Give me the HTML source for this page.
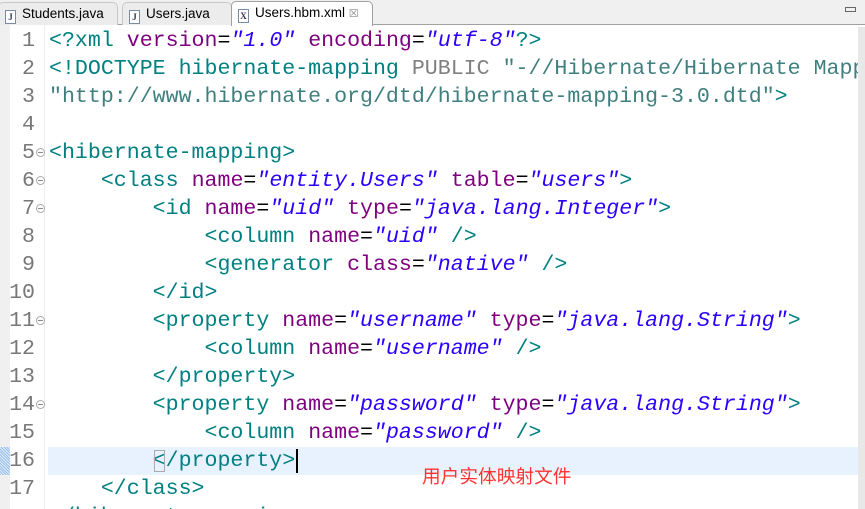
<!DOCTYPE html>
<html><head><meta charset="utf-8"><style>
html,body{margin:0;width:865px;height:509px;overflow:hidden}
body{background:#fff;font-family:"Liberation Sans",sans-serif}
#w{position:relative;width:865px;height:509px;overflow:hidden}
.tabs{position:absolute;left:0;top:0;width:865px;height:24px;background:#f0f0f0;border-bottom:1px solid #a0a0a0}
.tab{position:absolute;top:2px;height:22px;font-size:13.5px;line-height:22px;color:#000;border:1px solid #c8c8c8;border-bottom:none;border-radius:5px 5px 0 0;background:#ececec;overflow:hidden;white-space:nowrap}
.tab.act{background:#fff;top:1px;height:24px;border-color:#a0a0a0}
.ic{display:inline-block;width:9px;height:12px;border:1px solid #7a8aa0;background:#fff;font-size:9px;line-height:12px;text-align:center;color:#335;margin:0 6px 0 6px;vertical-align:-2px;font-family:"Liberation Serif",serif;font-weight:bold}
.gutL{position:absolute;left:0;top:25px;width:10px;height:484px;background:#f0f0f0}
.gutSep{position:absolute;left:44px;top:25px;width:1px;height:484px;background:#eee}
.ln{position:absolute;left:0;width:35px;text-align:right;font-family:"Liberation Mono",monospace;font-size:21.6px;color:#787878;height:28px;line-height:28px}
.fold{position:absolute;left:36px;width:7px;height:7px;border:1px solid #aaa;border-radius:50%;font-size:0}
.fold::after{content:"";position:absolute;left:1px;top:3px;width:5px;height:1px;background:#888}
.code{position:absolute;left:49px;font-family:"Liberation Mono",monospace;font-size:21.6px;white-space:pre;height:28px;line-height:28px;color:#000}
.t{color:#008080}.a{color:#7f007f}.v{color:#2a00ff;font-style:italic}.g{color:#808080}.s{color:#3f7f7f}
.hl{position:absolute;left:48px;top:447px;width:810px;height:28px;background:#e8f2fe}
.sb{position:absolute;left:858px;top:27px;width:7px;height:482px;background:#e8e8e8}
</style></head><body><div id="w">
<div class="tabs">
<div class="tab" style="left:-2px;width:118px"><span class="ic">J</span>Students.java</div>
<div class="tab" style="left:122px;width:108px"><span class="ic">J</span>Users.java</div>
<div class="tab act" style="left:231px;width:140px"><span class="ic">X</span>Users.hbm.xml <span style="color:#888;font-size:11px">&#x2612;</span></div>
<div style="position:absolute;left:845px;top:7px;width:9px;height:3px;border:1px solid #666"></div>
</div>
<div class="gutL"></div><div class="gutSep"></div>
<div class="hl"></div>
<div style="position:absolute;left:0;top:447px;width:10px;height:28px;background:repeating-linear-gradient(45deg,#9cc0ec 0 1px,#e0ecf8 1px 2px)"></div>
<div class="sb"></div>
<div class="ln" style="top:27px">1</div><div class="ln" style="top:55px">2</div><div class="ln" style="top:83px">3</div><div class="ln" style="top:111px">4</div><div class="ln" style="top:139px">5</div><div class="ln" style="top:167px">6</div><div class="ln" style="top:195px">7</div><div class="ln" style="top:223px">8</div><div class="ln" style="top:251px">9</div><div class="ln" style="top:279px">10</div><div class="ln" style="top:307px">11</div><div class="ln" style="top:335px">12</div><div class="ln" style="top:363px">13</div><div class="ln" style="top:391px">14</div><div class="ln" style="top:419px">15</div><div class="ln" style="top:447px">16</div><div class="ln" style="top:475px">17</div>
<div class="fold" style="top:148px"></div><div class="fold" style="top:176px"></div><div class="fold" style="top:204px"></div><div class="fold" style="top:316px"></div><div class="fold" style="top:400px"></div>
<div class="code" style="top:27px"><span class="t">&lt;?xml </span><span class="a">version</span>=<span class="v">"1.0"</span> <span class="a">encoding</span>=<span class="v">"utf-8"</span><span class="t">?&gt;</span></div>
<div class="code" style="top:55px;width:809px;overflow:hidden"><span class="t">&lt;!DOCTYPE hibernate-mapping </span><span class="g">PUBLIC</span> <span class="s">"-//Hibernate/Hibernate Mapping DTD</span></div>
<div class="code" style="top:83px"><span class="s">"http://www.hibernate.org/dtd/hibernate-mapping-3.0.dtd"</span><span class="t">&gt;</span></div>
<div class="code" style="top:139px"><span class="t">&lt;hibernate-mapping&gt;</span></div>
<div class="code" style="top:167px">    <span class="t">&lt;class </span><span class="a">name</span>=<span class="v">"entity.Users"</span> <span class="a">table</span>=<span class="v">"users"</span><span class="t">&gt;</span></div>
<div class="code" style="top:195px">        <span class="t">&lt;id </span><span class="a">name</span>=<span class="v">"uid"</span> <span class="a">type</span>=<span class="v">"java.lang.Integer"</span><span class="t">&gt;</span></div>
<div class="code" style="top:223px">            <span class="t">&lt;column </span><span class="a">name</span>=<span class="v">"uid"</span> <span class="t">/&gt;</span></div>
<div class="code" style="top:251px">            <span class="t">&lt;generator </span><span class="a">class</span>=<span class="v">"native"</span> <span class="t">/&gt;</span></div>
<div class="code" style="top:279px">        <span class="t">&lt;/id&gt;</span></div>
<div class="code" style="top:307px">        <span class="t">&lt;property </span><span class="a">name</span>=<span class="v">"username"</span> <span class="a">type</span>=<span class="v">"java.lang.String"</span><span class="t">&gt;</span></div>
<div class="code" style="top:335px">            <span class="t">&lt;column </span><span class="a">name</span>=<span class="v">"username"</span> <span class="t">/&gt;</span></div>
<div class="code" style="top:363px">        <span class="t">&lt;/property&gt;</span></div>
<div class="code" style="top:391px">        <span class="t">&lt;property </span><span class="a">name</span>=<span class="v">"password"</span> <span class="a">type</span>=<span class="v">"java.lang.String"</span><span class="t">&gt;</span></div>
<div class="code" style="top:419px">            <span class="t">&lt;column </span><span class="a">name</span>=<span class="v">"password"</span> <span class="t">/&gt;</span></div>
<div class="code" style="top:447px">        <span class="t" style="outline:1px solid #aaa;outline-offset:-2px">&lt;</span><span class="t">/property&gt;</span><span style="border-left:2px solid #000;margin-left:1px"> </span></div>
<div class="code" style="top:475px">    <span class="t">&lt;/class&gt;</span></div>
<div class="code" style="top:503px"><span class="t">&lt;/hibernate-mapping&gt;</span></div>
<div style="position:absolute;left:422px;top:465px;font-family:'Liberation Sans','Noto Sans CJK SC',sans-serif;font-size:18.7px;color:#ff3333;line-height:24px;white-space:nowrap">用户实体映射文件</div>
</div></body></html>
